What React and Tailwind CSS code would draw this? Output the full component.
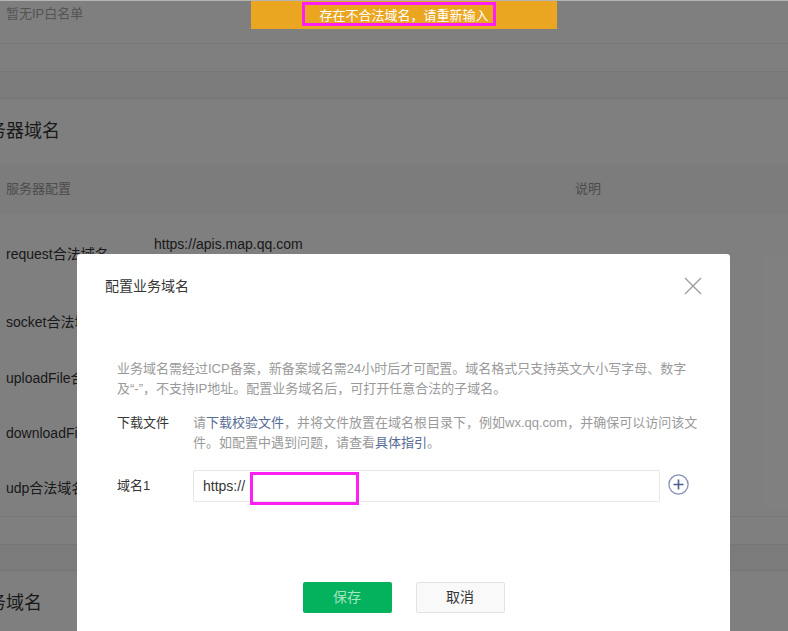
import React from 'react';

const rows = [
  { label: 'request合法域名', height: 'h-[80px]', urls: ['https://apis.map.qq.com', 'https://restapi.amap.com'] },
  { label: 'socket合法域名', height: 'h-[56px]', urls: [] },
  { label: 'uploadFile合法域名', height: 'h-[56px]', urls: [] },
  { label: 'downloadFile合法域名', height: 'h-[55px]', urls: [] },
  { label: 'udp合法域名', height: 'h-[55px]', urls: [] },
];

function CloseIcon() {
  return (
    <svg width="18" height="18" viewBox="0 0 18 18" fill="none">
      <path d="M1 1L17 17M17 1L1 17" stroke="#9b9b9b" strokeWidth="1.3" />
    </svg>
  );
}

function PlusIcon() {
  return (
    <svg width="21" height="21" viewBox="0 0 21 21" fill="none">
      <circle cx="10.5" cy="10.5" r="9.6" stroke="#8590b5" strokeWidth="1.3" />
      <path d="M10.5 5.5V15.5M5.5 10.5H15.5" stroke="#4e5d8f" strokeWidth="1.6" />
    </svg>
  );
}

export default function App() {
  return (
    <div className="relative w-[788px] h-[631px] overflow-hidden bg-white font-['Liberation_Sans','Noto_Sans_CJK_SC',sans-serif]">
      {/* page behind the dialog */}
      <div className="w-full">
        <div className="h-[44px] border-b border-[#ececec] pl-[6px]">
          <p className="text-[13px] leading-[28px] text-[#a9a9a9]">暂无IP白名单</p>
        </div>
        <div className="h-[28px] border-b border-[#ececec]" />
        <div className="h-[27px] border-b border-[#ececec] bg-[#f4f6f5]" />

        <div className="h-[65px] flex items-center">
          <h2 className="ml-[-30px] text-[18px] text-[#353535]">服务器域名</h2>
        </div>

        <div className="h-[50px] bg-[#f6f8f7] flex items-center text-[13px] text-[#9a9a9a]">
          <span className="w-[575px] pl-[6px]">服务器配置</span>
          <span>说明</span>
        </div>

        {rows.map((row) => (
          <div key={row.label} className={`${row.height} flex items-center text-[14px] text-[#353535]`}>
            <span className="w-[154px] pl-[6px] shrink-0">{row.label}</span>
            <div className="leading-[20px]">
              {row.urls.map((u) => (
                <p key={u}>{u}</p>
              ))}
            </div>
          </div>
        ))}

        <div className="border-t border-[#ececec] h-[28px]" />
        <div className="h-[27px] border-t border-b border-[#ececec] bg-[#f4f6f5]" />

        <div className="h-[64px] flex items-center">
          <h2 className="ml-[-30px] text-[18px] text-[#353535]">业务域名</h2>
        </div>
      </div>

      {/* mask */}
      <div className="absolute inset-0 bg-black/50" />
      <div className="absolute top-0 left-0 w-full h-px bg-[#b5b5b5]" />

      {/* toast */}
      <div className="absolute left-[251px] top-[1px] w-[306px] h-[28px] bg-[#eba621] flex items-center justify-center">
        <span className="text-[13px] text-white pt-[2px]">存在不合法域名，请重新输入</span>
        <span className="absolute left-[51px] top-[1px] w-[194px] h-[24px] border-[3px] border-[#ff1ff5]" />
      </div>

      {/* dialog */}
      <div className="absolute left-[77px] top-[254px] w-[653px] h-[420px] bg-white rounded-t-[3px]">
        <div className="h-[64px] px-[28px] flex items-center justify-between">
          <h3 className="text-[14px] text-[#353535]">配置业务域名</h3>
          <button className="w-[18px] h-[18px] flex items-center justify-center">
            <CloseIcon />
          </button>
        </div>

        <div className="px-[40px] pt-[41px]">
          <p className="text-[13px] leading-[20px] text-[#9a9a9a]">
            业务域名需经过ICP备案，新备案域名需24小时后才可配置。域名格式只支持英文大小写字母、数字及“-”，不支持IP地址。配置业务域名后，可打开任意合法的子域名。
          </p>

          <div className="flex mt-[14px] text-[13px] leading-[20px]">
            <span className="w-[76px] shrink-0 text-[#353535]">下载文件</span>
            <p className="text-[#9a9a9a] -mr-[10px]">
              请<a className="text-[#576b95]">下载校验文件</a>，并将文件放置在域名根目录下，例如wx.qq.com，并确保可以访问该文件。如配置中遇到问题，请查看<a className="text-[#576b95]">具体指引</a>。
            </p>
          </div>

          <div className="flex items-center mt-[17px]">
            <span className="w-[76px] shrink-0 text-[13px] text-[#353535]">域名1</span>
            <div className="relative w-[467px] h-[32px] border border-[#e7e7eb] rounded-[2px] flex items-center pl-[9px] text-[14px] text-[#353535]">
              <span>https://</span>
              <input className="flex-1 min-w-0 h-full outline-none bg-transparent" />
              <span className="absolute left-[56px] top-[1px] w-[109px] h-[33px] border-[3px] border-[#ff1ff5]" />
            </div>
            <div className="ml-[8px] -mt-[4px]">
              <PlusIcon />
            </div>
          </div>

          <div className="flex justify-center gap-[24px] mt-[80px] text-[14px]">
            <button className="w-[89px] h-[31px] rounded-[2px] bg-[#04b15c] text-[#a3e4c2]">保存</button>
            <button className="w-[89px] h-[31px] rounded-[2px] border border-[#e3e3e3] bg-[#f9f9f9] text-[#353535]">取消</button>
          </div>
        </div>
      </div>
    </div>
  );
}
